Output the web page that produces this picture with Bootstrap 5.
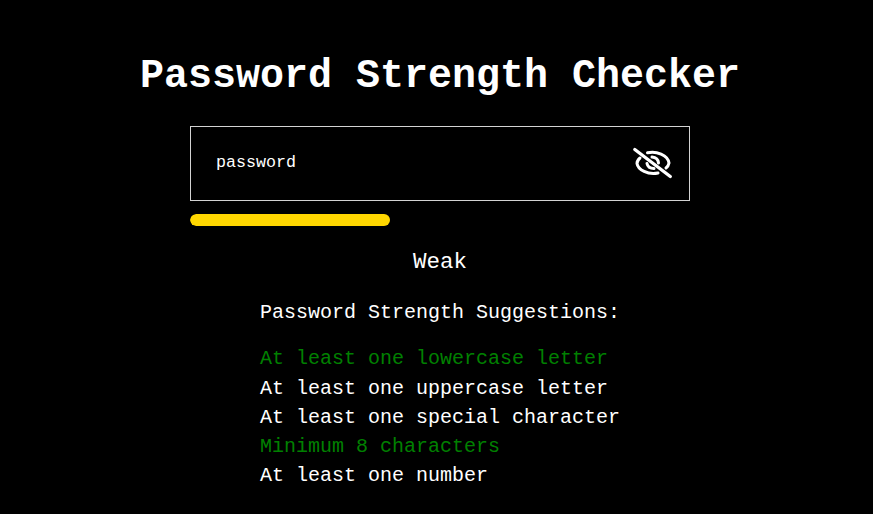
<!DOCTYPE html>
<html lang="en">
<head>
<meta charset="utf-8">
<meta name="viewport" content="width=device-width, initial-scale=1">
<title>Password Strength Checker</title>
<link href="https://cdn.jsdelivr.net/npm/bootstrap@5.3.0/dist/css/bootstrap.min.css" rel="stylesheet">
<style>
body{background:#000;color:#fff;font-family:"Courier New","Liberation Mono",monospace;height:514px;overflow:hidden}
.checker{padding:54px 0 0 7px}
.checker h1{font-size:40px;line-height:46px;margin-bottom:26px;font-weight:700}
.panel{width:500px}
.pass-box{height:75px;border:1px solid #d3d3d3;padding:0 15px 0 25px}
.pass-box input{font-size:16.67px;height:40px;min-width:0;margin-top:-3px}
.pass-box svg{margin-top:-2px}
.meter{height:12px;margin-top:13px;background:transparent;border-radius:6px}
.meter .progress-bar{background:gold;border-radius:6px}
.level{font-size:22.5px;line-height:28px;margin-top:22px}
.tips{width:360px;font-size:20px;line-height:29.25px;margin-top:22px}
.tips h2{font-size:20px;line-height:29px;font-weight:400;margin-bottom:17.3px}
.met{color:green}
</style>
</head>
<body>
<main class="checker d-flex flex-column align-items-center">
  <h1 class="text-nowrap">Password Strength Checker</h1>
  <div class="panel">
    <div class="pass-box d-flex align-items-center">
      <input type="text" class="flex-grow-1 bg-transparent border-0 p-0 text-white" value="password" aria-label="Password">
      <svg width="42" height="34" viewBox="0 0 42 34" fill="none" stroke="#fff" stroke-width="3" stroke-linecap="round">
        <path d="M15.500 6.800C24 4.500 36 9 37 17Q36.500 20 34 22M8 12Q5 14.500 5 17.500C6 24 16 29 26 27"/>
        <path d="M20 11Q26 11.500 26.500 17M15 17.500Q16 22.500 22 22.500"/>
        <path stroke-width="3.300" d="M2.800 3.500L38.300 30.500"/>
      </svg>
    </div>
    <div class="progress meter"><div class="progress-bar" style="width:40%"></div></div>
    <div class="level text-center">Weak</div>
  </div>
  <section class="tips text-nowrap">
    <h2>Password Strength Suggestions:</h2>
    <ul class="list-unstyled mb-0">
      <li class="met">At least one lowercase letter</li>
      <li>At least one uppercase letter</li>
      <li>At least one special character</li>
      <li class="met">Minimum 8 characters</li>
      <li>At least one number</li>
    </ul>
  </section>
</main>
<script src="https://cdn.jsdelivr.net/npm/bootstrap@5.3.0/dist/js/bootstrap.bundle.min.js"></script>
</body>
</html>
